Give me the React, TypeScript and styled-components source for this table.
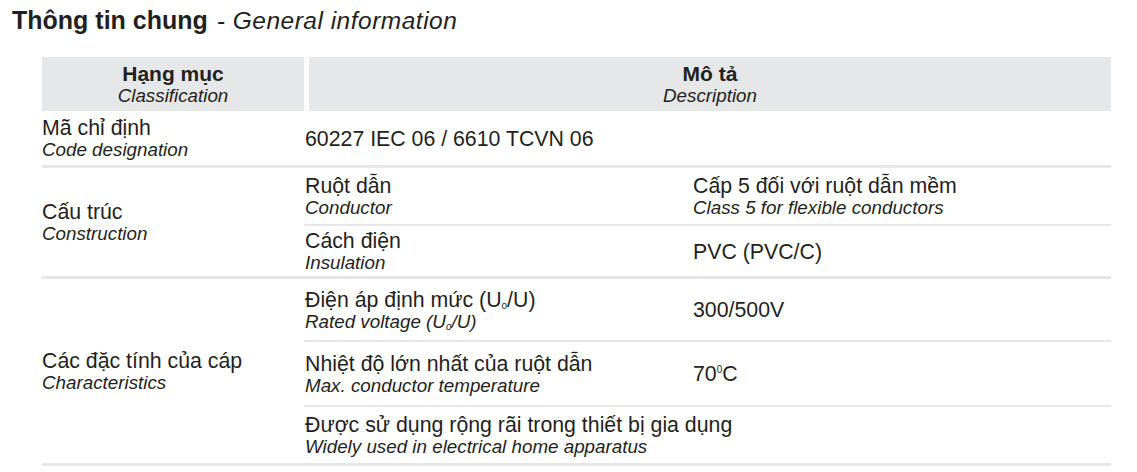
import React from 'react'
import styled, { createGlobalStyle } from 'styled-components'

const GlobalStyle = createGlobalStyle`
  body {
    margin: 0;
    background: #ffffff;
    color: #231f20;
    font-family: "Liberation Sans", Arial, sans-serif;
  }
`

const Page = styled.div`
  width: 1137px;
  height: 472px;
  padding: 6px 0 0 12px;
  box-sizing: border-box;
`

const Title = styled.h1`
  margin: 0;
  font-size: 25px;
  line-height: 28px;
  font-weight: 700;
`

const TitleSub = styled.span`
  font-size: 24.5px;
  font-weight: 400;
  font-style: italic;
  letter-spacing: 0.5px;
  margin-left: 2px;
`

const Table = styled.div`
  width: 1069px;
  margin: 22px 0 0 30px;
`

const Header = styled.div`
  display: grid;
  grid-template-columns: 262px 1fr;
  column-gap: 5px;
`

const HeadCell = styled.div`
  height: 54px;
  background: #e6e7e8;
  display: flex;
  flex-direction: column;
  align-items: center;
  justify-content: center;
`

const HeadMain = styled.div`
  font-size: 21px;
  font-weight: 700;
  line-height: 22px;
`

const Main = styled.div`
  font-size: 21.3px;
  line-height: 21px;
`

const Alt = styled.div`
  font-size: 18.8px;
  font-style: italic;
  line-height: 21px;
`

const Group = styled.div`
  display: grid;
  grid-template-columns: 262px 1fr;
  border-bottom: 3px solid #e6e7e8;
`

const GroupLabel = styled.div`
  display: flex;
  flex-direction: column;
  justify-content: center;
  padding-top: 2px;
`

const SubRows = styled.div`
  display: flex;
  flex-direction: column;
`

const SubRow = styled.div<{ $h: number; $last?: boolean }>`
  display: grid;
  grid-template-columns: 388px 1fr;
  align-items: center;
  height: ${(p) => p.$h}px;
  padding-top: 2px;
  box-sizing: border-box;
  border-bottom: ${(p) => (p.$last ? 'none' : '2px solid #e6e7e8')};
`

const Cell = styled.div<{ $wide?: boolean }>`
  padding-left: 1px;
  grid-column: ${(p) => (p.$wide ? '1 / -1' : 'auto')};
  white-space: nowrap;
`

const Sub = styled.sub`
  font-size: 10px;
  vertical-align: -2px;
  line-height: 0;
`

const Sup = styled.sup`
  font-size: 10px;
  vertical-align: 8px;
  line-height: 0;
`

export default function App () {
  return (
    <>
      <GlobalStyle />
      <Page>
        <Title>
          Thông tin chung <TitleSub>- General information</TitleSub>
        </Title>
        <Table>
          <Header>
            <HeadCell>
              <HeadMain>Hạng mục</HeadMain>
              <Alt>Classification</Alt>
            </HeadCell>
            <HeadCell>
              <HeadMain>Mô tả</HeadMain>
              <Alt>Description</Alt>
            </HeadCell>
          </Header>

          <Group>
            <GroupLabel>
              <Main>Mã chỉ định</Main>
              <Alt>Code designation</Alt>
            </GroupLabel>
            <SubRows>
              <SubRow $h={54} $last>
                <Cell $wide>
                  <Main>60227 IEC 06 / 6610 TCVN 06</Main>
                </Cell>
              </SubRow>
            </SubRows>
          </Group>

          <Group>
            <GroupLabel>
              <Main>Cấu trúc</Main>
              <Alt>Construction</Alt>
            </GroupLabel>
            <SubRows>
              <SubRow $h={58}>
                <Cell>
                  <Main>Ruột dẫn</Main>
                  <Alt>Conductor</Alt>
                </Cell>
                <Cell>
                  <Main>Cấp 5 đối với ruột dẫn mềm</Main>
                  <Alt>Class 5 for flexible conductors</Alt>
                </Cell>
              </SubRow>
              <SubRow $h={50} $last>
                <Cell>
                  <Main>Cách điện</Main>
                  <Alt>Insulation</Alt>
                </Cell>
                <Cell>
                  <Main>PVC (PVC/C)</Main>
                </Cell>
              </SubRow>
            </SubRows>
          </Group>

          <Group>
            <GroupLabel>
              <Main>Các đặc tính của cáp</Main>
              <Alt>Characteristics</Alt>
            </GroupLabel>
            <SubRows>
              <SubRow $h={63}>
                <Cell>
                  <Main>Điện áp định mức (U<Sub>o</Sub>/U)</Main>
                  <Alt>Rated voltage (U<Sub>o</Sub>/U)</Alt>
                </Cell>
                <Cell>
                  <Main>300/500V</Main>
                </Cell>
              </SubRow>
              <SubRow $h={65}>
                <Cell>
                  <Main>Nhiệt độ lớn nhất của ruột dẫn</Main>
                  <Alt>Max. conductor temperature</Alt>
                </Cell>
                <Cell>
                  <Main>70<Sup>0</Sup>C</Main>
                </Cell>
              </SubRow>
              <SubRow $h={56} $last>
                <Cell $wide>
                  <Main>Được sử dụng rộng rãi trong thiết bị gia dụng</Main>
                  <Alt>Widely used in electrical home apparatus</Alt>
                </Cell>
              </SubRow>
            </SubRows>
          </Group>
        </Table>
      </Page>
    </>
  )
}
